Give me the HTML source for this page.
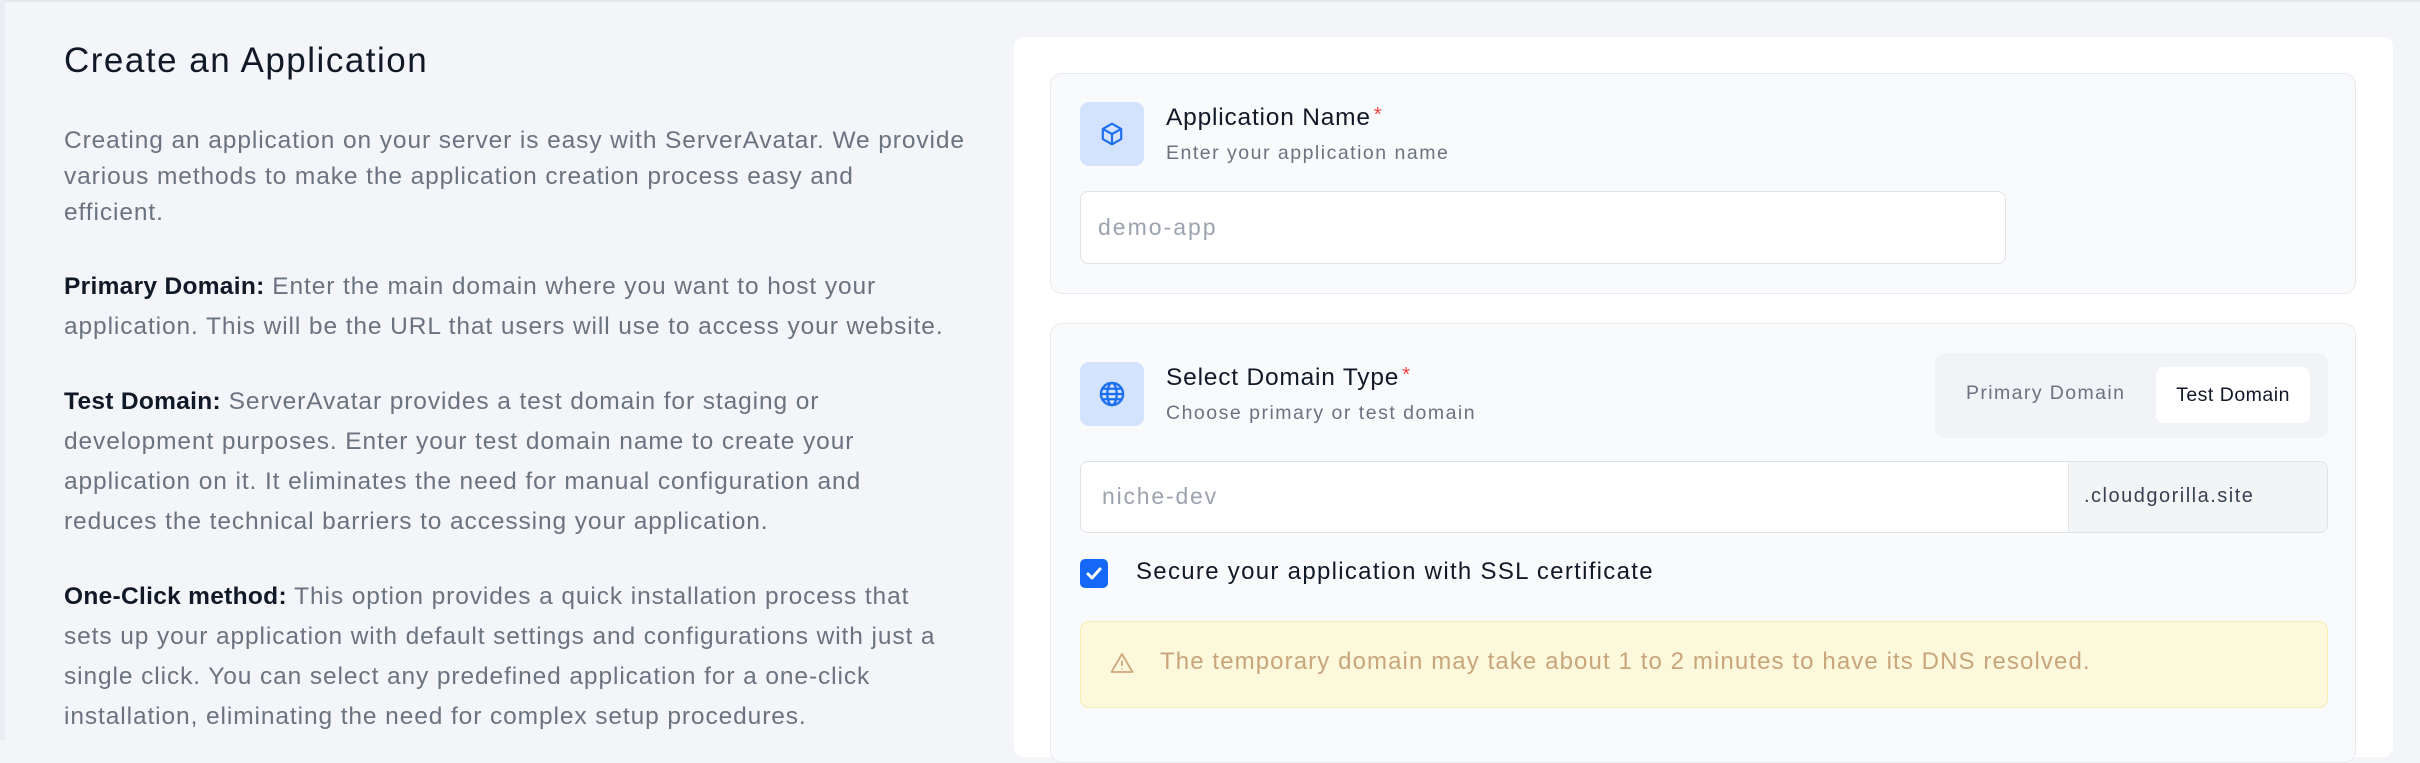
<!DOCTYPE html>
<html><head><style>
*{margin:0;padding:0;box-sizing:border-box}
body{width:2420px;height:740px;overflow:hidden;background:#f3f5f8;font-family:"Liberation Sans",sans-serif;position:relative}
.a{position:absolute;white-space:nowrap}
.p{position:absolute;left:64px;font-size:24.5px;color:#6b7280;line-height:40px;white-space:nowrap;letter-spacing:0.9px}
.p b{color:#111827;font-weight:700;letter-spacing:0.3px}
.card{position:absolute;left:1014px;top:37px;width:1379px;height:720px;background:#fff;border-radius:10px}
.sec{position:absolute;left:1050px;width:1306px;background:#f9fafb;border:1.5px solid #e8eaee;border-radius:12px}
.ib{position:absolute;left:1080px;width:64px;height:64px;background:#d3e3fd;border-radius:9px;display:flex;align-items:center;justify-content:center}
.t{font-size:24.5px;color:#111827;font-weight:500;letter-spacing:0.8px}
.t i{color:#ef4444;font-style:normal;font-size:20px;vertical-align:top;margin-left:3px}
.s{font-size:19.5px;color:#6b7280;letter-spacing:1.5px}
.in{position:absolute;background:#fff;border:1.5px solid #dfe2e7;border-radius:8px}
</style></head><body>
<div class="a" style="left:0;top:0;width:2420px;height:2px;background:#e5e7eb"></div>
<div class="a" style="left:0;top:0;width:5px;height:740px;background:#e9ecf0"></div>
<div class="a" style="left:64px;top:41px;font-size:35px;color:#111827;letter-spacing:1.5px">Create an Application</div>
<div class="p" style="top:123px;line-height:36px">Creating an application on your server is easy with ServerAvatar. We provide<br>various methods to make the application creation process easy and<br>efficient.</div>
<div class="p" style="top:267px"><b>Primary Domain:</b> Enter the main domain where you want to host your<br>application. This will be the URL that users will use to access your website.</div>
<div class="p" style="top:382px"><b>Test Domain:</b> ServerAvatar provides a test domain for staging or<br>development purposes. Enter your test domain name to create your<br>application on it. It eliminates the need for manual configuration and<br>reduces the technical barriers to accessing your application.</div>
<div class="p" style="top:577px"><b>One-Click method:</b> This option provides a quick installation process that<br>sets up your application with default settings and configurations with just a<br>single click. You can select any predefined application for a one-click<br>installation, eliminating the need for complex setup procedures.</div>

<div class="card"></div>
<div class="sec" style="top:73px;height:221px"></div>
<div class="ib" style="top:102px"><svg width="26" height="26" viewBox="0 0 24 24" fill="none" stroke="#1d6ff2" stroke-width="2" stroke-linejoin="round"><path d="M12 2.5l8.5 4.8v9.4L12 21.5l-8.5-4.8V7.3z"/><path d="M3.5 7.3L12 12l8.5-4.7M12 12v9.5"/></svg></div>
<div class="a t" style="left:1166px;top:104px">Application Name<i>*</i></div>
<div class="a s" style="left:1166px;top:142px">Enter your application name</div>
<div class="in" style="left:1080px;top:191px;width:926px;height:73px"></div>
<div class="a" style="left:1098px;top:214px;font-size:23px;color:#9ca3af;letter-spacing:2px">demo-app</div>

<div class="sec" style="top:323px;height:440px"></div>
<div class="ib" style="top:362px"><svg width="28" height="28" viewBox="0 0 24 24" fill="none" stroke="#1d6ff2" stroke-width="2"><circle cx="12" cy="12" r="9.5"/><ellipse cx="12" cy="12" rx="4" ry="9.5"/><path d="M2.5 12h19M4 7.5h16M4 16.5h16"/></svg></div>
<div class="a t" style="left:1166px;top:364px">Select Domain Type<i>*</i></div>
<div class="a s" style="left:1166px;top:402px">Choose primary or test domain</div>
<div class="a" style="left:1935px;top:353px;width:393px;height:85px;background:#f1f3f6;border-radius:10px"></div>
<div class="a" style="left:1966px;top:382px;font-size:19.5px;color:#6b7280;letter-spacing:1.4px">Primary Domain</div>
<div class="a" style="left:2156px;top:367px;width:154px;height:56px;background:#fff;border-radius:8px;font-size:19.5px;color:#111827;text-align:center;line-height:56px;letter-spacing:0.5px">Test Domain</div>
<div class="in" style="left:1080px;top:461px;width:1248px;height:72px;overflow:hidden"><div style="position:absolute;left:987px;top:0;right:0;bottom:0;background:#f3f4f6;border-left:1.5px solid #e5e7eb"></div></div>
<div class="a" style="left:1102px;top:483px;font-size:23px;color:#9ca3af;letter-spacing:1.8px">niche-dev</div>
<div class="a" style="left:2084px;top:485px;font-size:20px;color:#374151;letter-spacing:1.5px">.cloudgorilla.site</div>
<div class="a" style="left:1080px;top:559px;width:28px;height:29px;background:#1468f5;border-radius:5px"><svg width="28" height="29" viewBox="0 0 28 29"><path d="M8 15l4 4 8-9" fill="none" stroke="#fff" stroke-width="3" stroke-linecap="round" stroke-linejoin="round"/></svg></div>
<div class="a" style="left:1136px;top:558px;font-size:24px;color:#111827;font-weight:500;letter-spacing:1.3px">Secure your application with SSL certificate</div>
<div class="a" style="left:1080px;top:621px;width:1248px;height:87px;background:#fbf8dc;border:1.5px solid #f8ecb0;border-radius:9px"></div>
<svg class="a" style="left:1110px;top:652px" width="24" height="22" viewBox="0 0 24 22" fill="none" stroke="#cfa77a" stroke-width="1.8" stroke-linejoin="round"><path d="M12 2L22.5 20h-21z"/><path d="M12 8.5v5.5M12 16.5v1"/></svg>
<div class="a" style="left:1160px;top:648px;font-size:24px;color:#c9a57b;letter-spacing:1.1px">The temporary domain may take about 1 to 2 minutes to have its DNS resolved.</div>
</body></html>
